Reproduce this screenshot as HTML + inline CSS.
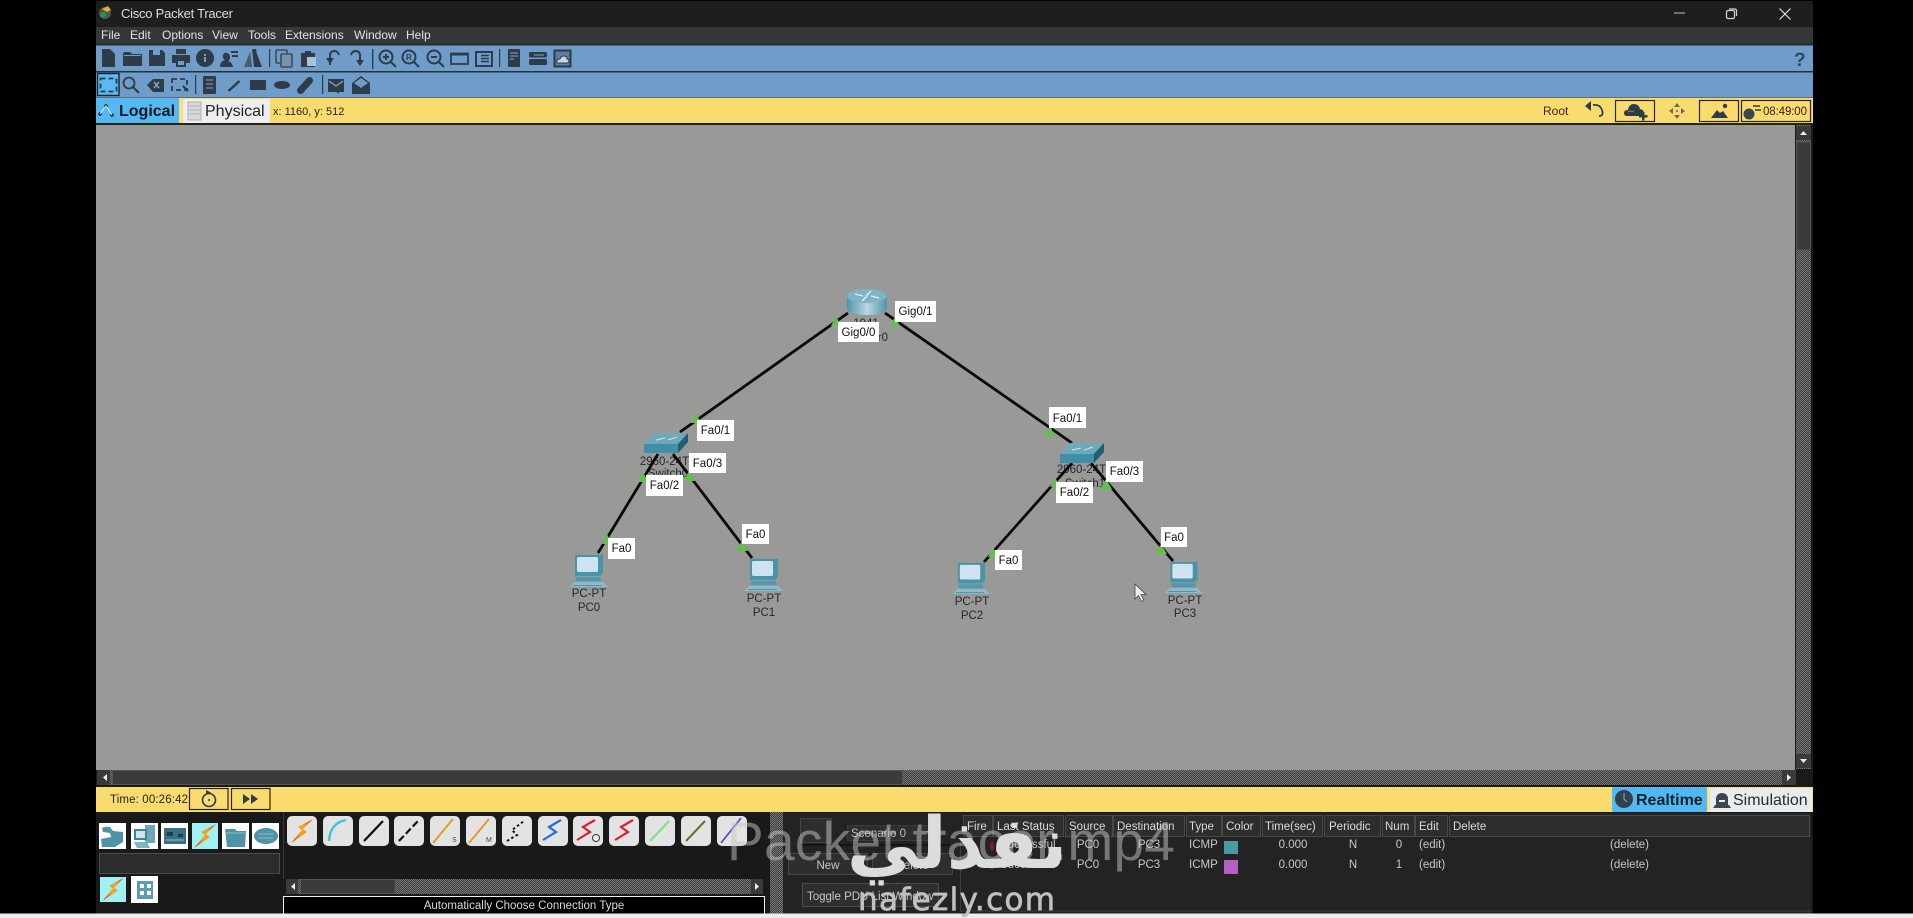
<!DOCTYPE html>
<html><head><meta charset="utf-8"><title>Cisco Packet Tracer</title>
<style>
html,body{margin:0;padding:0;background:#000;width:1913px;height:918px;overflow:hidden}
svg{display:block;font-family:"Liberation Sans",sans-serif;filter:blur(.35px)}
.m{font-size:12px;fill:#e2e2e2}
.l{font-size:11.5px;fill:#111;text-anchor:middle}
.d{font-size:11.5px;fill:#26262e;text-anchor:middle}
.h{font-size:11.5px;fill:#dcdcdc}
.c{font-size:11.5px;fill:#c8c8c8}
.cm{font-size:11.5px;fill:#c8c8c8;text-anchor:middle}
.i{fill:#2e3c49}
.o{fill:none;stroke:#2e3c49;stroke-width:2}
.b{fill:#e3e3e3}
</style></head><body>
<svg width="1913" height="918" viewBox="0 0 1913 918" xmlns="http://www.w3.org/2000/svg">
<defs>
<pattern id="dz" width="2" height="2" patternUnits="userSpaceOnUse"><rect width="2" height="2" fill="#3c3c3c"/><rect width="1" height="1" fill="#777"/><rect x="1" y="1" width="1" height="1" fill="#777"/></pattern>
<linearGradient id="rg" x1="0" x2="1" y1="0" y2="0"><stop offset="0" stop-color="#4f95aa"/><stop offset=".5" stop-color="#b9d8e2"/><stop offset="1" stop-color="#4f95aa"/></linearGradient>
<linearGradient id="boltg" x1="1" y1="0" x2="0" y2="1"><stop offset="0" stop-color="#d8322a"/><stop offset=".35" stop-color="#f2a31e"/><stop offset=".6" stop-color="#f2a31e"/><stop offset="1" stop-color="#c9322a"/></linearGradient>
<symbol id="pc" viewBox="0 0 38 33" overflow="visible">
<polygon points="5,1 30,1 33,0 33,19 30,22 5,22" fill="#4a94aa"/>
<rect x="7" y="3" width="21" height="15" rx="1.5" fill="#cfe3ee"/>
<rect x="6" y="23" width="25" height="4" fill="#4f9ab0"/>
<polygon points="4,28 33,28 38,33 0,33" fill="#8cbccb"/>
<rect x="3" y="31" width="29" height="1" fill="#4a94aa"/>
</symbol>
<symbol id="sw" viewBox="0 0 44 21" overflow="visible">
<polygon points="0,12 10,1 44,1 34,12" fill="#6ea8bb"/>
<polygon points="0,12 34,12 34,21 0,21" fill="#3f8fa7"/>
<polygon points="34,12 44,1 44,10 34,21" fill="#1f5f75"/>
<path d="M12 8l9-2M24 8l9-3" stroke="#cfe3ea" stroke-width="1"/>
</symbol>
<symbol id="boltz" viewBox="0 0 26 26" overflow="visible">
<polygon points="24,1 9,9 13,12 2,25 18,14 14,11" fill="url(#boltg)"/>
</symbol>
</defs>

<rect width="1913" height="918" fill="#000"/>
<!-- title bar -->
<rect x="96" y="1" width="1717" height="26" fill="#1e1e1e"/>
<circle cx="105" cy="13" r="6" fill="#4d5a3e"/><path d="M102 9l6-3 3 4-4 2z" fill="#d9b13c"/><circle cx="103" cy="15" r="3" fill="#3a8a58"/>
<text x="121" y="18" font-size="13" fill="#dedede" textLength="112">Cisco Packet Tracer</text>
<path d="M1674 13h11" stroke="#aaa" stroke-width="1.2"/>
<rect x="1726.5" y="10.5" width="8" height="8" rx="1.5" fill="none" stroke="#d6d6d6" stroke-width="1.2"/><path d="M1729 9h5.5q2 0 2 2v5" fill="none" stroke="#d6d6d6" stroke-width="1.2"/>
<path d="M1779.5 8.5l11 11M1790.5 8.5l-11 11" stroke="#e0e0e0" stroke-width="1.2"/>
<!-- menu -->
<rect x="96" y="27" width="1717" height="18" fill="#363636"/>
<text class="m" x="101" y="39">File</text><text class="m" x="130" y="39">Edit</text><text class="m" x="162" y="39">Options</text><text class="m" x="212" y="39">View</text><text class="m" x="248" y="39">Tools</text><text class="m" x="285" y="39">Extensions</text><text class="m" x="354" y="39">Window</text><text class="m" x="406" y="39">Help</text>
<!-- toolbars -->
<rect x="96" y="45" width="1717" height="53" fill="#6f9cc8"/>
<rect x="96" y="44" width="1717" height="1.5" fill="#1f2a33"/>
<rect x="96" y="71" width="1717" height="1.5" fill="#25323d"/>
<rect x="96" y="97" width="1717" height="1.5" fill="#5d6c75"/>
<!-- row 1 icons -->
<path class="i" d="M102 49h8l5 5v13h-13z"/>
<path class="i" d="M123 54q0-2 2-2h5l2 2h10v12h-19z"/><rect x="124" y="55" width="17" height="1" fill="#6f9cc8"/>
<path class="i" d="M149 50h4v5h7v-5h2l3 3v13h-16z"/>
<path class="i" d="M176 49h10v5h-10zM172 55h18v8h-4v4h-10v-4h-4z"/><rect x="178" y="61" width="6" height="4" fill="#6f9cc8"/>
<circle class="i" cx="205" cy="58" r="9"/><rect x="204" y="57" width="2" height="5" fill="#889aac"/><rect x="204" y="54" width="2" height="2" fill="#889aac"/>
<path class="i" d="M220 67q0-6 5-7-3-2-2-5t4-2 3 4-2 4q4 1 5 6z"/><path class="i" d="M231 51h7v2h-7zM232 55h6v2h-6z"/>
<path class="i" d="M252 49h4l1 5 5 13h-8z"/><path d="M250 52l-6 15h8l-1-9" fill="#4a5c6d"/>
<rect x="269" y="49" width="1.2" height="18" fill="#2e3c49"/>
<rect x="276" y="50" width="11" height="13" rx="1" fill="none" stroke="#3d4d5c" stroke-width="1.6"/><rect x="281" y="54" width="11" height="13" rx="1" fill="#7a93ad" stroke="#3d4d5c" stroke-width="1.6"/>
<path class="i" d="M301 53h4v-2h6v2h4v14h-14z"/><rect x="307" y="57" width="9" height="9" fill="#aac1d8"/>
<path class="o" d="M330 65v-9q0-5 4-5t5 4"/><path class="i" d="M326 58h8l-4 6z"/>
<path class="o" d="M360 65v-9q0-5-4-5t-5 4"/><path class="i" d="M356 60h8l-4 6z"/>
<rect x="372" y="49" width="1.4" height="20" fill="#2e3c49"/>
<circle cx="386" cy="57" r="6.5" fill="none" stroke="#2e3c49" stroke-width="2"/><path d="M391 62l5 5M383 57h6M386 54v6" stroke="#2e3c49" stroke-width="2"/>
<circle cx="409" cy="57" r="6.5" fill="none" stroke="#2e3c49" stroke-width="2"/><path d="M414 62l5 5" stroke="#2e3c49" stroke-width="2"/><text x="406" y="60" font-size="8" font-weight="bold" fill="#2e3c49">R</text>
<circle cx="434" cy="57" r="6.5" fill="none" stroke="#2e3c49" stroke-width="2"/><path d="M439 62l5 5M431 57h6" stroke="#2e3c49" stroke-width="2"/>
<rect x="451" y="53.5" width="17" height="10.5" fill="none" stroke="#2e3c49" stroke-width="1.8"/><rect x="451" y="53" width="17" height="2.5" fill="#2e3c49"/>
<rect x="476" y="52" width="16" height="14" fill="none" stroke="#2e3c49" stroke-width="2"/><path d="M481 55.5h8M481 58.5h8M481 61.5h8" stroke="#2e3c49" stroke-width="1.4"/>
<rect x="499" y="49" width="1.2" height="18" fill="#2e3c49"/>
<rect x="508" y="49" width="12" height="18" rx="1" class="i"/><path d="M510 53h8M510 56h8M510 59h4" stroke="#8aa4bd"/>
<rect x="529" y="52" width="18" height="5.5" rx="1.5" class="i"/><rect x="529" y="59" width="18" height="6" rx="1.5" class="i"/><path d="M534 55h10" stroke="#8aa4bd"/>
<rect x="554.500" y="50.500" width="16" height="16" fill="#5f7d9b" stroke="#2e3c49" stroke-width="2"/><path d="M557 63q-1-4 3-4 1-3 4-3t3 3q2 0 2 2t-2 2z" fill="#c8d6e3" stroke="#2e3c49"/>
<text x="1794" y="66" font-size="19" font-weight="bold" fill="#2c4a66">?</text>
<!-- row 2 icons -->
<rect x="97.500" y="73.500" width="21.500" height="22" fill="#5ab9f0" stroke="#17222b" stroke-width="1.400"/>
<rect x="100.500" y="78.500" width="16" height="13" fill="none" stroke="#2e3c49" stroke-width="1.800" stroke-dasharray="5 3"/>
<circle cx="129" cy="83" r="5.500" fill="none" stroke="#2e3c49" stroke-width="1.800"/><path d="M133 87l6 6" stroke="#2e3c49" stroke-width="2"/>
<path class="i" d="M147 85l6-6h11v13h-11z"/><path d="M154 82l5 6M159 82l-5 6" stroke="#8aa4bd" stroke-width="1.500"/>
<rect x="172" y="79" width="15" height="11" fill="none" stroke="#2e3c49" stroke-width="1.800" stroke-dasharray="5 3"/><path d="M183 86l5 5" stroke="#2e3c49" stroke-width="2"/>
<rect x="195" y="75" width="1.200" height="19" fill="#2e3c49"/>
<rect class="i" x="203" y="76" width="13" height="18" rx="1"/><path d="M206 80h7M206 84h7M206 88h7" stroke="#8aa4bd"/>
<path d="M228.500 91l11-10" stroke="#2e3c49" stroke-width="2.400"/>
<rect class="i" x="250" y="80" width="16" height="10"/>
<ellipse class="i" cx="282" cy="85" rx="8" ry="4"/>
<path d="M300.500 90.500l9-10" stroke="#2e3c49" stroke-width="7" stroke-linecap="round"/>
<rect x="322" y="75" width="1.200" height="19" fill="#2e3c49"/>
<path class="i" d="M328 79h16v13h-5v2l-2-2h-9z"/><path d="M329 81l7 5 7-5" fill="none" stroke="#8aa4bd" stroke-width="1.300"/>
<path class="i" d="M352 83l9-7 9 7v11h-18z"/><path d="M354 83l7-5 7 5-7 5z" fill="#6f9cc8"/>
<!-- tabs row -->
<rect x="96" y="98" width="1717" height="26" fill="#fadc6e"/>
<rect x="96" y="123" width="1717" height="2" fill="#23231c"/>
<rect x="96" y="98" width="83" height="25" fill="#54b9f2"/>
<rect x="180" y="98" width="1" height="25" fill="#f3e8a0"/>
<rect x="183" y="99" width="87" height="24" rx="2" fill="#eceef0"/>
<circle cx="100" cy="114" r="1.800" fill="#1e2a34"/><circle cx="106" cy="106" r="1.800" fill="#1e2a34"/><circle cx="112" cy="115" r="1.800" fill="#1e2a34"/><path d="M100 114l6-8 6 9" stroke="#dfeffa" fill="none"/>
<text x="119" y="116" font-size="16" font-weight="bold" fill="#101820">Logical</text>
<rect x="188" y="102" width="13" height="18" fill="#d7d9db" stroke="#b0b2b4"/><path d="M188 106h13M188 110h13M188 114h13" stroke="#b0b2b4"/>
<text x="205" y="116" font-size="16" fill="#222">Physical</text>
<text x="273" y="115" font-size="11" fill="#222">x: 1160, y: 512</text>
<text x="1543" y="115" font-size="12" fill="#3a2020">Root</text>
<path d="M1599 116q5 0 3-6t-9-5" fill="none" stroke="#2e3c49" stroke-width="1.800"/><path class="i" d="M1585 106l6-5v10z"/>
<rect x="1615.500" y="100.500" width="39" height="21" fill="none" stroke="#26261c" stroke-width="1.200"/>
<path class="i" d="M1627 116q-3 0-3-3t4-3q1-6 6-6t6 5q4 1 4 4 0 3-3 3z"/><path class="i" d="M1639 115h3v-3h2.500v3h3v2.500h-3v3h-2.500v-3h-3z"/><path d="M1628 112q3-2 6 0" stroke="#8c8c60" fill="none"/>
<path class="i" d="M1677 103l3 4h-6zM1677 119l3-4h-6zM1669 111l4-3v6zM1685 111l-4-3v6z" opacity=".7"/><circle class="i" cx="1677" cy="111" r="1" opacity=".7"/>
<rect x="1699.500" y="100.500" width="39" height="21" fill="none" stroke="#26261c" stroke-width="1.200"/>
<path class="i" d="M1711 118l6-8 3 3 3-2 5 7z"/><circle class="i" cx="1725" cy="106" r="2.200"/>
<rect x="1741.500" y="100.500" width="69" height="21" fill="none" stroke="#26261c" stroke-width="1.200"/>
<circle cx="1749" cy="114" r="5.500" fill="#3b4650"/><path d="M1753 106h7M1755 110h6" stroke="#2e3c49" stroke-width="1.500"/>
<text x="1763" y="115" font-size="11.500" fill="#3a2020" textLength="44">08:49:00</text>
<!-- canvas -->
<rect x="96" y="125" width="1700" height="645" fill="#999998"/>
<!-- device labels under lines -->
<text class="d" x="866" y="327">1941</text>
<text class="d" x="888" y="341" style="text-anchor:end">Router0</text>
<text class="d" x="668" y="465">2960-24TT</text><text class="d" x="668" y="477">Switch0</text>
<text class="d" x="1085" y="473">2960-24TT</text><text class="d" x="1085" y="487">Switch1</text>
<text class="d" x="589" y="597">PC-PT</text><text class="d" x="589" y="611">PC0</text>
<text class="d" x="764" y="602">PC-PT</text><text class="d" x="764" y="616">PC1</text>
<text class="d" x="972" y="605">PC-PT</text><text class="d" x="972" y="619">PC2</text>
<text class="d" x="1185" y="604">PC-PT</text><text class="d" x="1185" y="617">PC3</text>
<!-- cables -->
<g stroke="#0a0a0a" stroke-width="2.800" fill="none">
<path d="M848 313L680 432"/><path d="M885 313L1072 443"/>
<path d="M658 454L598 553"/><path d="M673 454L752 558"/>
<path d="M1072 463L984 562"/><path d="M1091 463L1173 561"/>
</g>
<!-- devices -->
<g>
<path d="M847 295v13q0 7 20 7t20-7v-13z" fill="url(#rg)"/>
<ellipse cx="867" cy="296" rx="20" ry="7" fill="#7fb3c5"/>
<path d="M855 294l8 2M871 291l-5 5M879 298l-8-2M862 301l5-5" stroke="#e4f0f4" stroke-width="1.400"/>
</g>
<use href="#sw" x="644" y="432" width="44" height="21"/>
<use href="#sw" x="1060" y="442" width="44" height="21"/>
<use href="#pc" x="570" y="554" width="38" height="33"/>
<use href="#pc" x="745" y="558" width="38" height="33"/>
<use href="#pc" x="953" y="562" width="37" height="32"/>
<use href="#pc" x="1165" y="561" width="38" height="32"/>
<!-- link lights -->
<g fill="#5fc04a">
<polygon points="836,316 841,326 831,326"/><polygon points="895,317 900,326 889,326"/>
<polygon points="696,413 701,423 691,423"/><polygon points="1050,426 1055,436 1044,436"/>
<polygon points="643,472 648,482 638,482"/><polygon points="689,471 695,481 683,481"/>
<polygon points="607,534 612,544 602,544"/><polygon points="742,541 748,551 736,551"/>
<polygon points="1055,477 1060,487 1050,487"/><polygon points="1106,479 1112,489 1100,489"/>
<polygon points="993,547 998,557 988,557"/><polygon points="1161,544 1167,554 1155,554"/>
</g>
<!-- port labels -->
<g fill="#fff">
<rect x="838" y="322" width="41" height="20"/><rect x="895" y="301" width="41" height="21"/>
<rect x="697" y="420" width="37" height="21"/><rect x="689" y="453" width="37" height="20"/><rect x="646" y="475" width="37" height="21"/>
<rect x="608" y="538" width="27" height="21"/><rect x="742" y="524" width="27" height="20"/>
<rect x="1049" y="407" width="37" height="21"/><rect x="1106" y="461" width="37" height="21"/><rect x="1056" y="482" width="37" height="21"/>
<rect x="995" y="550" width="27" height="20"/><rect x="1161" y="527" width="26" height="20"/>
</g>
<text class="l" x="858.500" y="336">Gig0/0</text><text class="l" x="915.500" y="315">Gig0/1</text>
<text class="l" x="715.500" y="434">Fa0/1</text><text class="l" x="707.500" y="467">Fa0/3</text><text class="l" x="664.500" y="489">Fa0/2</text>
<text class="l" x="621.500" y="552">Fa0</text><text class="l" x="755.500" y="538">Fa0</text>
<text class="l" x="1067.500" y="422">Fa0/1</text><text class="l" x="1124.500" y="475">Fa0/3</text><text class="l" x="1074.500" y="496">Fa0/2</text>
<text class="l" x="1008.500" y="564">Fa0</text><text class="l" x="1174" y="541">Fa0</text>
<!-- mouse cursor -->
<path d="M1135 584v15l3.500-3.500 3 6 2.500-1.200-3-5.800h5z" fill="#eee" stroke="#444" stroke-width=".8"/>
<!-- vertical scrollbar -->
<rect x="1795" y="125" width="18" height="645" fill="#1a1a1a"/>
<rect x="1796" y="125" width="15" height="644" fill="url(#dz)"/>
<rect x="1796" y="126" width="15" height="14" fill="#3a3a3a"/><path d="M1800 135l3.500-4 3.500 4z" fill="#eee"/>
<rect x="1796.500" y="142" width="14" height="108" fill="#3b3b3b" stroke="#555"/>
<rect x="1796" y="754" width="15" height="14" fill="#3a3a3a"/><path d="M1800 759l3.500 4 3.500-4z" fill="#eee"/>
<!-- horizontal scrollbar -->
<rect x="96" y="770" width="1717" height="17" fill="#1a1a1a"/>
<rect x="110" y="770" width="1672" height="15" fill="url(#dz)"/>
<rect x="97" y="770" width="13" height="15" fill="#3a3a3a"/><path d="M107 774l-4 3.500 4 3.500z" fill="#eee"/>
<rect x="112.500" y="770.500" width="790" height="14" fill="#3b3b3b" stroke="#555"/>
<rect x="1782" y="770" width="14" height="15" fill="#3a3a3a"/><path d="M1787 774l4 3.500-4 3.500z" fill="#eee"/>
<!-- bottom yellow -->
<rect x="96" y="787" width="1717" height="25" fill="#fadc6e"/>
<text x="110" y="803" font-size="11.500" fill="#2a2218" textLength="78">Time: 00:26:42</text>
<rect x="189.500" y="788.500" width="38.500" height="21" fill="none" stroke="#26261c" stroke-width="1.200"/>
<circle cx="209" cy="800" r="6.500" fill="none" stroke="#2e3c49" stroke-width="1.600"/><circle cx="209" cy="800" r="1" fill="#2e3c49"/><path class="i" d="M206 790l5 2.500-5 2.500z"/>
<rect x="231.500" y="788.500" width="38.500" height="21" fill="none" stroke="#26261c" stroke-width="1.200"/>
<path class="i" d="M243 794l7 5-7 5zM251 794l7 5-7 5z"/>
<rect x="1612" y="787" width="95" height="25" rx="2" fill="#50b9f1"/>
<circle cx="1624" cy="799" r="9" fill="#34404c"/><path d="M1624 793v6l3 3" stroke="#7fb4d8" stroke-width="1" fill="none"/>
<text x="1636" y="805" font-size="16" font-weight="bold" fill="#10202c">Realtime</text>
<rect x="1708" y="787" width="1.500" height="25" fill="#f3e8a0"/>
<rect x="1710" y="788" width="102" height="24" rx="2" fill="#e9ebec"/>
<path d="M1713 808h18l-2-3h-1v-7q-1-5-6-5t-6 5v7h-1z" fill="#3a4651"/><rect x="1719" y="800" width="6" height="2" fill="#e9ebec"/>
<text x="1733" y="805" font-size="16" fill="#222c34">Simulation</text>
<!-- bottom panel -->
<rect x="96" y="812" width="1717" height="102" fill="#191919"/>
<!-- category tiles -->
<g fill="#fff">
<rect x="99" y="823" width="27" height="26"/><rect x="131" y="823" width="27" height="26"/><rect x="161" y="823" width="27" height="26"/>
<rect x="222" y="823" width="27" height="26"/><rect x="252" y="823" width="27" height="26"/><rect x="131" y="876" width="27" height="27"/>
</g>
<rect x="192" y="823" width="26" height="26" fill="#9ff1f3"/>
<rect x="100" y="877" width="26" height="25" fill="#9ff1f3"/>
<path d="M102 828q4-2 8-1l3 4 10 1v10l-8 5H102l-1-8 10-2-1-4-7-1z" fill="#4f93a8"/>
<rect x="145" y="825" width="10" height="18" fill="#6fa6b8"/><rect x="134" y="829" width="13" height="11" fill="#3f8198"/><rect x="136" y="831" width="9" height="7" fill="#cfe3ee"/><polygon points="134,842 147,842 150,848 137,848" fill="#7fb3c5"/>
<rect x="164" y="828" width="22" height="16" fill="#3a7083"/><path d="M167 832h6v4h-6zM178 834h5v3h-5z" fill="#1e3e4c"/><path d="M166 840h18" stroke="#8cc" stroke-width="1"/>
<use href="#boltz" x="192" y="823" width="26" height="26"/>
<path d="M225 829h10l2 2h9l-1 16h-18z" fill="#4f93a8"/><path d="M226 833h19" stroke="#8cbccb"/>
<ellipse cx="266" cy="836" rx="12" ry="8" fill="#4f93a8"/><path d="M258 834h16M259 838h14" stroke="#8cbccb"/>
<rect x="99.500" y="853.500" width="180" height="20" fill="#2c2c2a" stroke="#4c4c4c"/>
<use href="#boltz" x="100" y="877" width="26" height="25"/>
<rect x="137" y="881" width="16" height="18" fill="#5c9cb1"/><rect x="140" y="884" width="4" height="4" fill="#fff"/><rect x="147" y="884" width="4" height="4" fill="#fff"/><rect x="140" y="891" width="4" height="4" fill="#fff"/><rect x="147" y="891" width="4" height="4" fill="#fff"/>
<!-- cable tiles -->
<rect x="283" y="813" width="1" height="66" fill="#3a3a3a"/>
<g class="b">
<rect x="287" y="816" width="30" height="30" rx="5"/><rect x="323" y="816" width="30" height="30" rx="5"/><rect x="359" y="816" width="30" height="30" rx="5"/><rect x="394" y="816" width="30" height="30" rx="5"/><rect x="430" y="816" width="30" height="30" rx="5"/><rect x="466" y="816" width="30" height="30" rx="5"/><rect x="502" y="816" width="30" height="30" rx="5"/><rect x="538" y="816" width="30" height="30" rx="5"/><rect x="573" y="816" width="30" height="30" rx="5"/><rect x="609" y="816" width="30" height="30" rx="5"/><rect x="645" y="816" width="30" height="30" rx="5"/><rect x="681" y="816" width="30" height="30" rx="5"/><rect x="717" y="816" width="30" height="30" rx="5"/>
</g>
<use href="#boltz" x="289" y="818" width="26" height="26"/>
<path d="M329 841q1-18 17-21" fill="none" stroke="#35c6dc" stroke-width="2.400"/>
<path d="M364 841l19-20" stroke="#0c0c0c" stroke-width="2.200"/>
<path d="M399 841l19-20" stroke="#0c0c0c" stroke-width="2.200" stroke-dasharray="7 3"/>
<path d="M433 843l20-24" stroke="#ea9a2a" stroke-width="2"/><text x="452" y="842" font-size="7" fill="#444">S</text>
<path d="M469 843l20-24" stroke="#ea9a2a" stroke-width="2"/><text x="486" y="842" font-size="7" fill="#444">M</text>
<path d="M507 841l10-6-5-5 12-9" fill="none" stroke="#111" stroke-width="2" stroke-dasharray="2.500 2.500"/>
<path d="M543 840l13-8-7-5 12-7" fill="none" stroke="#1d6fe0" stroke-width="2.200"/>
<path d="M577 840l13-8-7-5 12-7" fill="none" stroke="#dd1f2c" stroke-width="2.200"/><circle cx="596" cy="838" r="3.500" fill="#eee" stroke="#333"/>
<path d="M615 840l13-8-7-5 12-7" fill="none" stroke="#dd1f2c" stroke-width="2.200"/>
<path d="M650 841l19-20" stroke="#7fe07f" stroke-width="2"/>
<path d="M686 841l19-20" stroke="#6d6d20" stroke-width="2"/>
<path d="M721 843l20-25" stroke="#5a4cc0" stroke-width="1.800"/>
<!-- cable scroll -->
<rect x="286" y="879" width="477" height="15" fill="url(#dz)"/>
<rect x="286" y="879" width="12" height="15" fill="#3a3a3a"/><path d="M295 883l-4 3.500 4 3.500z" fill="#eee"/>
<rect x="300.500" y="879.500" width="94.500" height="14" fill="#3b3b3b" stroke="#555"/>
<rect x="751" y="879" width="12" height="15" fill="#3a3a3a"/><path d="M755 883l4 3.500-4 3.500z" fill="#eee"/>
<rect x="283.500" y="896.500" width="481" height="18" fill="#000" stroke="#eee"/>
<text x="524" y="909" font-size="11.500" fill="#d8d8d8" text-anchor="middle">Automatically Choose Connection Type</text>
<!-- right panel -->
<rect x="770" y="812" width="13" height="102" fill="url(#dz)"/>
<rect x="783" y="813" width="1028" height="100" fill="#232323"/>
<rect x="766" y="812" width="4" height="102" fill="#191919"/>
<rect x="800.500" y="818.500" width="31" height="24" fill="#2e2e2e" stroke="#444"/>
<rect x="847.500" y="825.500" width="86" height="15" fill="#2e2e2e" stroke="#3c3c3c"/>
<text x="851" y="837" font-size="11.500" fill="#bbb">Scenario 0</text>
<path d="M926 831l7 0-3.500 4z" fill="#999"/>
<path d="M800 845h150" stroke="#111" stroke-width="1.500"/>
<rect x="788.500" y="853.500" width="79" height="21" fill="#2e2e2e" stroke="#444"/><text x="828" y="869" font-size="11.500" fill="#c8c8c8" text-anchor="middle">New</text>
<rect x="872.500" y="853.500" width="80" height="21" fill="#2e2e2e" stroke="#444"/><text x="912" y="869" font-size="11.500" fill="#c8c8c8" text-anchor="middle">Delete</text>
<rect x="802.500" y="883.500" width="136" height="23" fill="#2e2e2e" stroke="#4c4c4c"/><text x="807" y="900" font-size="11.500" fill="#c8c8c8">Toggle PDU List Window</text>
<path d="M960.500 837v74h851" fill="none" stroke="#3d3d3d"/>
<!-- table header -->
<g fill="#2d2d2d" stroke="#484848">
<rect x="963.500" y="815.500" width="29" height="21"/><rect x="993.500" y="815.500" width="70" height="21"/><rect x="1065.500" y="815.500" width="47" height="21"/><rect x="1113.500" y="815.500" width="71" height="21"/><rect x="1186.500" y="815.500" width="35" height="21"/><rect x="1222.500" y="815.500" width="38" height="21"/><rect x="1262.500" y="815.500" width="60" height="21"/><rect x="1324.500" y="815.500" width="56" height="21"/><rect x="1382.500" y="815.500" width="32" height="21"/><rect x="1415.500" y="815.500" width="32" height="21"/><rect x="1449.500" y="815.500" width="360" height="21"/>
</g>
<g class="h">
<text x="967" y="830">Fire</text><text x="997" y="830">Last Status</text><text x="1069" y="830">Source</text><text x="1117" y="830">Destination</text><text x="1189" y="830">Type</text><text x="1226" y="830">Color</text><text x="1265" y="830">Time(sec)</text><text x="1329" y="830">Periodic</text><text x="1385" y="830">Num</text><text x="1419" y="830">Edit</text><text x="1453" y="830">Delete</text>
</g>
<!-- table rows -->
<ellipse cx="992" cy="846" rx="2" ry="5" fill="#8a1a22"/><ellipse cx="992" cy="864" rx="2.500" ry="6" fill="#8a1a22"/>
<rect x="1224" y="841" width="14" height="13" fill="#4a9aa5"/><rect x="1224" y="860" width="14" height="14" fill="#b35fc4"/>
<text class="c" x="1000" y="848">Successful</text><text class="cm" x="1088" y="848">PC0</text><text class="cm" x="1149" y="848">PC3</text><text class="c" x="1189" y="848">ICMP</text><text class="cm" x="1293" y="848">0.000</text><text class="cm" x="1353" y="848">N</text><text class="cm" x="1399" y="848">0</text><text class="c" x="1419" y="848">(edit)</text><text class="c" x="1610" y="848">(delete)</text>
<text class="c" x="1000" y="868">Successful</text><text class="cm" x="1088" y="868">PC0</text><text class="cm" x="1149" y="868">PC3</text><text class="c" x="1189" y="868">ICMP</text><text class="cm" x="1293" y="868">0.000</text><text class="cm" x="1353" y="868">N</text><text class="cm" x="1399" y="868">1</text><text class="c" x="1419" y="868">(edit)</text><text class="c" x="1610" y="868">(delete)</text>
<!-- bottom strip -->
<rect x="0" y="913.500" width="1913" height="5" fill="#eee"/>
<!-- watermarks -->
<text x="727" y="860" font-size="55" fill="#c8c8c8" fill-opacity=".5" textLength="448">Packet tracer.mp4</text>
<text x="957" y="868" font-size="72" font-weight="bold" fill="#dcdcdc" text-anchor="middle" style="font-family:'DejaVu Sans',sans-serif" direction="rtl">نفذلي</text>
<text x="858" y="910" font-size="31" fill="#c0c0c0" stroke="#c0c0c0" stroke-width=".7" textLength="197" style="font-family:'DejaVu Sans',sans-serif">nafezly.com</text>
</svg>
</body></html>
